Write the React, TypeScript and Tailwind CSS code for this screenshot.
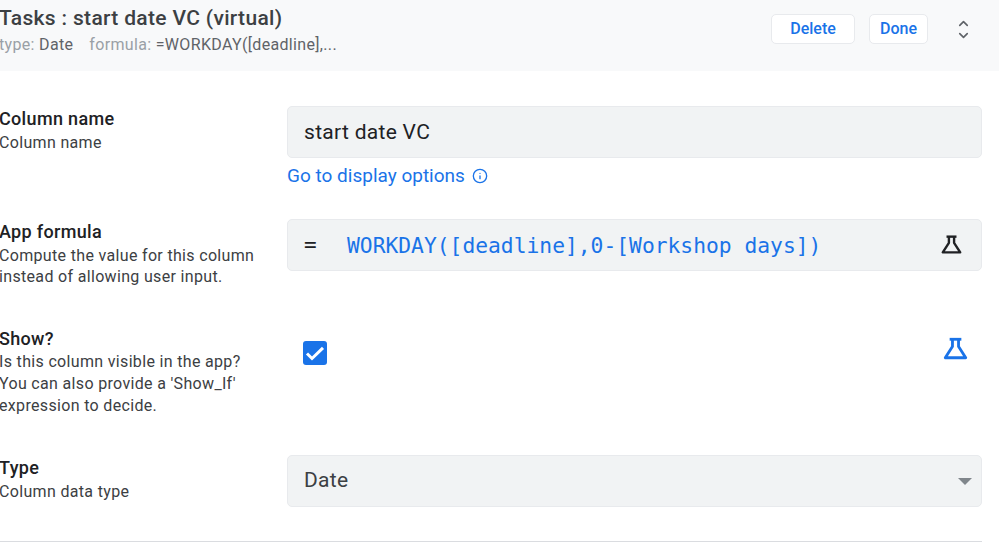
import { ChevronDown, ChevronUp, Info } from 'lucide-react';

const Flask = ({ className }: { className: string }) => (
  <svg viewBox="0 0 24 24" className={className} fill="none" stroke="currentColor" strokeWidth="2.5" strokeLinejoin="round">
    <path d="M6.800 3.800h10.400" />
    <path d="M9.300 3.800v6.500L2.900 20.200h18.200L14.700 10.300V3.800" />
  </svg>
);

const Label = ({ title, lines, tight }: { title: string; lines: string[]; tight?: boolean }) => (
  <div className="w-[288px] shrink-0 -ml-px tracking-[0.33px]">
    <div className="text-[18px] leading-[24px] font-medium text-[#202124]">{title}</div>
    <div className={tight ? 'text-[16px] leading-[22px] text-[#3c4043]' : 'text-[16px] leading-[21px] text-[#3c4043] mt-[1px]'}>
      {lines.map((l) => (
        <div key={l}>{l}</div>
      ))}
    </div>
  </div>
);

export default function App() {
  return (
    <div className="w-[999px] h-[546px] overflow-hidden bg-white font-['Roboto',sans-serif]">
      {/* Header */}
      <div className="h-[71px] bg-[#f8f9fa] flex items-start justify-between pr-[26px]">
        <div className="-ml-px pt-[5px]">
          <div className="text-[21px] leading-[26px] font-medium tracking-[0.33px] text-[#3c4043]">Tasks : start date VC (virtual)</div>
          <div className="text-[16px] leading-[21px] mt-[3px] flex gap-[16px] tracking-[0.33px]">
            <span className="text-[#9aa0a6]">
              type: <span className="text-[#5f6368]">Date</span>
            </span>
            <span className="text-[#9aa0a6]">
              formula: <span className="text-[#5f6368]">=WORKDAY([deadline],...</span>
            </span>
          </div>
        </div>
        <div className="flex items-center pt-[14px]">
          <button className="h-[30px] w-[84px] rounded-[5px] bg-white border border-[#e8eaed] text-[16px] font-medium text-[#1a73e8]">Delete</button>
          <button className="h-[30px] w-[59px] ml-[14px] rounded-[5px] bg-white border border-[#e8eaed] text-[16px] font-medium text-[#1a73e8]">Done</button>
          <div className="ml-[28px] mr-[2px] flex flex-col items-center text-[#5f6368]">
            <ChevronUp size={15} strokeWidth={2.6} className="-mb-[3px]" />
            <ChevronDown size={15} strokeWidth={2.6} />
          </div>
        </div>
      </div>

      {/* Form */}
      <div className="pr-[17px]">
        <div className="flex pt-[35px]">
          <div className="pt-[1px]">
            <Label title="Column name" lines={['Column name']} />
          </div>
          <div className="flex-1">
            <div className="h-[52px] rounded-[5px] bg-[#f1f3f4] border border-[#e8eaed] flex items-center px-[16px] pt-[1px] text-[21px] tracking-[0.3px] text-[#202124]">start date VC</div>
            <div className="flex items-center gap-[7px] mt-[6px] h-[24px] text-[19px] text-[#1a73e8]">
              Go to display options
              <Info size={16} strokeWidth={2} />
            </div>
          </div>
        </div>

        <div className="flex pt-[31px]">
          <div className="pt-[1px]">
            <Label title="App formula" lines={['Compute the value for this column', 'instead of allowing user input.']} />
          </div>
          <div className="flex-1 h-[52px] rounded-[5px] bg-[#f1f3f4] border border-[#e8eaed] flex items-center pl-[16px] pr-[18px]">
            <span className="w-[43px] pt-[1px] text-[21px] font-['DejaVu_Sans_Mono',monospace] text-[#202124]">=</span>
            <span className="flex-1 pt-[1px] text-[21.3px] font-['DejaVu_Sans_Mono',monospace] text-[#1a73e8]">WORKDAY([deadline],0-[Workshop days])</span>
            <Flask className="w-[23px] h-[23px] -mt-[1px] text-[#202124]" />
          </div>
        </div>

        <div className="flex pt-[40px]">
          <Label tight title="Show?" lines={['Is this column visible in the app?', "You can also provide a 'Show_If'", 'expression to decide.']} />
          <div className="flex-1 flex justify-between pl-[16px] pr-[13px] pt-[14px] h-[114px]">
            <div className="w-[24px] h-[24px] rounded-[3px] bg-[#1a73e8] flex items-center justify-center">
              <svg viewBox="0 0 24 24" className="w-[24px] h-[24px]" fill="none" stroke="white" strokeWidth="3">
                <path d="M4 12.500l5 5L20 6.800" />
              </svg>
            </div>
            <Flask className="w-[27px] h-[27px] -mt-[6px] text-[#1a73e8]" />
          </div>
        </div>

        <div className="flex pt-[14px]">
          <div className="pt-[1px]">
            <Label title="Type" lines={['Column data type']} />
          </div>
          <div className="flex-1 h-[52px] rounded-[5px] bg-[#f1f3f4] border border-[#e8eaed] flex items-center justify-between pl-[16px] pr-[9px] text-[21px] tracking-[0.3px] text-[#3c4043]">
            Date
            <span className="w-0 h-0 border-x-[7px] border-x-transparent border-t-[7px] border-t-[#80868b]" />
          </div>
        </div>

        <div className="mt-[34px] h-px bg-[#dadce0]" />
      </div>
    </div>
  );
}
